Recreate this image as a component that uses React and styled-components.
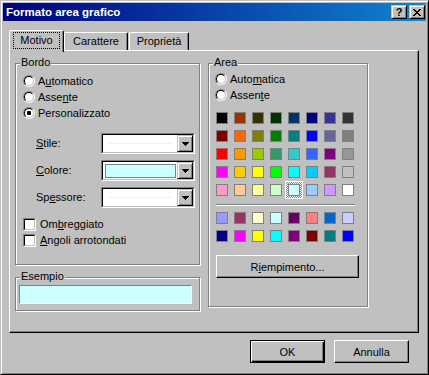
import React from "react";
import styled, { createGlobalStyle } from "styled-components";

const FACE = "#c0c0c0";
const SHADOW = "#808080";
const PALE_CYAN = "#ccffff";

// Excel colour palette: 5 rows of the standard set, then chart fills and chart lines
const standardColors = [
  ["#000000", "#993300", "#333300", "#003300", "#003366", "#000080", "#333399", "#333333"],
  ["#800000", "#ff6600", "#808000", "#008000", "#008080", "#0000ff", "#666699", "#808080"],
  ["#ff0000", "#ff9900", "#99cc00", "#339966", "#33cccc", "#3366ff", "#800080", "#969696"],
  ["#ff00ff", "#ffcc00", "#ffff00", "#00ff00", "#00ffff", "#00ccff", "#993366", "#c0c0c0"],
  ["#ff99cc", "#ffcc99", "#ffff99", "#ccffcc", "#ccffff", "#99ccff", "#cc99ff", "#ffffff"],
];
const chartColors = [
  ["#9999ff", "#993366", "#ffffcc", "#ccffff", "#660066", "#ff8080", "#0066cc", "#ccccff"],
  ["#000080", "#ff00ff", "#ffff00", "#00ffff", "#800080", "#800000", "#008080", "#0000ff"],
];

const App = () => {
  return (
    <>
      <GlobalStyle />
      <Window>
        {/* barra del titolo */}
        <TitleBar>
          <TitleText>Formato area grafico</TitleText>
          <TitleButton>?</TitleButton>
          <TitleButton>
            <svg width="8" height="7" viewBox="0 0 8 7">
              <path
                fill="#000"
                d="M0 0h2v1H0z M6 0h2v1H6z M1 1h2v1H1z M5 1h2v1H5z M2 2h4v1H2z M3 3h2v1H3z M2 4h4v1H2z M1 5h2v1H1z M5 5h2v1H5z M0 6h2v1H0z M6 6h2v1H6z"
              />
            </svg>
          </TitleButton>
        </TitleBar>

        <Body>
          {/* schede */}
          <TabRow>
            <Tab $active $w={55}>
              <FocusRing>Motivo</FocusRing>
            </Tab>
            <Tab $w={64}>Carattere</Tab>
            <Tab $w={60} $gap={1}>Proprietà</Tab>
          </TabRow>

          <Panel>
            <Column>
              <GroupBox $h={202}>
                <Legend>Bordo</Legend>
                <RadioList $top={9} $left={7}>
                  <OptionRow>
                    <Radio />
                    <span>A<u>u</u>tomatico</span>
                  </OptionRow>
                  <OptionRow>
                    <Radio />
                    <span>Asse<u>n</u>te</span>
                  </OptionRow>
                  <OptionRow>
                    <Radio checked />
                    <span>Personalizzato</span>
                  </OptionRow>
                </RadioList>

                <FieldList>
                  <FieldRow>
                    <FieldLabel><u>S</u>tile:</FieldLabel>
                    <ComboBox><LineSample /></ComboBox>
                  </FieldRow>
                  <FieldRow>
                    <FieldLabel><u>C</u>olore:</FieldLabel>
                    <ComboBox><ColorSample /></ComboBox>
                  </FieldRow>
                  <FieldRow>
                    <FieldLabel>Sp<u>e</u>ssore:</FieldLabel>
                    <ComboBox><LineSample /></ComboBox>
                  </FieldRow>
                </FieldList>

                <CheckList>
                  <OptionRow $gap={4}>
                    <CheckBox />
                    <span>Om<u>b</u>reggiato</span>
                  </OptionRow>
                  <OptionRow $gap={4}>
                    <CheckBox />
                    <span><u>A</u>ngoli arrotondati</span>
                  </OptionRow>
                </CheckList>
              </GroupBox>

              <GroupBox $h={34}>
                <Legend>Esempio</Legend>
                <Preview />
              </GroupBox>
            </Column>

            <GroupBox $h={244} $w={160}>
              <Legend>Area</Legend>
              <RadioList $top={7} $left={6}>
                <OptionRow>
                  <Radio />
                  <span>Auto<u>m</u>atica</span>
                </OptionRow>
                <OptionRow>
                  <Radio />
                  <span>Assen<u>t</u>e</span>
                </OptionRow>
              </RadioList>

              <SwatchGrid $top={6}>
                {standardColors.flat().map((c, i) => (
                  <SwatchCell key={i} $selected={i === 36}>
                    <Swatch style={{ background: c }} />
                  </SwatchCell>
                ))}
              </SwatchGrid>
              <Separator />
              <SwatchGrid>
                {chartColors.flat().map((c, i) => (
                  <SwatchCell key={i}>
                    <Swatch style={{ background: c }} />
                  </SwatchCell>
                ))}
              </SwatchGrid>

              <FillButton>R<u>i</u>empimento...</FillButton>
            </GroupBox>
          </Panel>

          <Footer>
            <Button $default>OK</Button>
            <Button>Annulla</Button>
          </Footer>
        </Body>
      </Window>
    </>
  );
};

// piccoli controlli
const Radio = ({ checked }) => (
  <RadioOuter>
    <RadioInner>{checked && <RadioDot />}</RadioInner>
  </RadioOuter>
);

const CheckBox = () => (
  <CheckOuter>
    <CheckInner />
  </CheckOuter>
);

const ComboBox = ({ children }) => (
  <ComboOuter>
    <ComboInner>
      <ComboValue>{children}</ComboValue>
      <DropButton>
        <svg width="7" height="4" viewBox="0 0 7 4">
          <path fill="#000" d="M0 0h7v1H0z M1 1h5v1H1z M2 2h3v1H2z M3 3h1v1H3z" />
        </svg>
      </DropButton>
    </ComboInner>
  </ComboOuter>
);

// styled components
const GlobalStyle = createGlobalStyle`
  html, body {
    margin: 0;
    padding: 0;
    background: ${FACE};
  }
  body {
    font-family: "Liberation Sans", Arial, sans-serif;
    font-size: 11px;
    color: #000;
  }
  u {
    text-underline-offset: 1px;
  }
`;

const Window = styled.div`
  box-sizing: border-box;
  width: 429px;
  height: 375px;
  padding: 2px;
  background: ${FACE};
  border: 1px solid;
  border-color: ${FACE} #000 #000 ${FACE};
  box-shadow: inset 1px 1px #fff, inset -1px -1px ${SHADOW};
  display: flex;
  flex-direction: column;
`;

const TitleBar = styled.div`
  height: 18px;
  flex: none;
  display: flex;
  align-items: center;
  gap: 2px;
  padding: 0 1px 0 3px;
  background: linear-gradient(to right, #000080, #1084d0);
`;

const TitleText = styled.div`
  flex: 1;
  color: #fff;
  font-weight: bold;
  font-size: 11.5px;
  line-height: 13px;
`;

const TitleButton = styled.div`
  box-sizing: border-box;
  width: 16px;
  height: 14px;
  background: ${FACE};
  border: 1px solid;
  border-color: ${FACE} #000 #000 ${FACE};
  box-shadow: inset 1px 1px #fff, inset -1px -1px ${SHADOW};
  display: flex;
  align-items: center;
  justify-content: center;
  font-weight: bold;
  font-size: 11px;
  line-height: 11px;
`;

const Body = styled.div`
  flex: 1;
  display: flex;
  flex-direction: column;
  padding: 9px 7px 0 6px;
`;

const TabRow = styled.div`
  height: 20px;
  display: flex;
  align-items: flex-end;
`;

const Tab = styled.div`
  box-sizing: border-box;
  position: relative;
  z-index: ${(p) => (p.$active ? 2 : 0)};
  width: ${(p) => p.$w}px;
  height: ${(p) => (p.$active ? 22 : 18)}px;
  margin-bottom: ${(p) => (p.$active ? -2 : 0)}px;
  margin-left: ${(p) => p.$gap || 0}px;
  background: ${FACE};
  border: 1px solid;
  border-bottom: none;
  border-color: #fff #000 transparent #fff;
  border-radius: 2px 2px 0 0;
  box-shadow: inset -1px 0 ${SHADOW};
  display: flex;
  align-items: ${(p) => (p.$active ? "flex-start" : "center")};
  justify-content: center;
  padding-top: ${(p) => (p.$active ? 1 : 0)}px;
  line-height: 13px;
`;

const FocusRing = styled.span`
  padding: 1px 6px;
  border: 1px dotted #000;
  line-height: 13px;
`;

const Panel = styled.div`
  box-sizing: border-box;
  height: 283px;
  flex: none;
  border: 1px solid;
  border-color: #fff #000 #000 #fff;
  box-shadow: inset -1px -1px ${SHADOW};
  padding: 0 5px;
  display: flex;
  align-items: flex-start;
  gap: 8px;
`;

const Column = styled.div`
  display: flex;
  flex-direction: column;
  width: 185px;
`;

const GroupBox = styled.div`
  box-sizing: border-box;
  position: relative;
  width: ${(p) => p.$w || 185}px;
  height: ${(p) => p.$h}px;
  margin-top: 12px;
  border: 1px solid ${SHADOW};
  box-shadow: inset 1px 1px #fff, 1px 1px #fff;
`;

const Legend = styled.span`
  position: absolute;
  top: -8px;
  left: 4px;
  padding: 0 1px;
  background: ${FACE};
  line-height: 13px;
`;

const RadioList = styled.div`
  display: flex;
  flex-direction: column;
  padding: ${(p) => p.$top}px 0 0 ${(p) => p.$left}px;
`;

const OptionRow = styled.label`
  display: flex;
  align-items: center;
  height: 16px;
  gap: ${(p) => p.$gap || 3}px;
  line-height: 13px;
  white-space: nowrap;
`;

const RadioOuter = styled.span`
  box-sizing: border-box;
  width: 12px;
  height: 12px;
  flex: none;
  border-radius: 50%;
  border: 1px solid;
  border-color: ${SHADOW} #fff #fff ${SHADOW};
  display: flex;
`;

const RadioInner = styled.span`
  box-sizing: border-box;
  flex: 1;
  border-radius: 50%;
  border: 1px solid;
  border-color: #000 ${FACE} ${FACE} #000;
  background: #fff;
  display: flex;
  align-items: center;
  justify-content: center;
`;

const RadioDot = styled.span`
  width: 4px;
  height: 4px;
  border-radius: 1px;
  background: #000;
`;

const FieldList = styled.div`
  display: flex;
  flex-direction: column;
  gap: 6px;
  padding: 12px 0 0 20px;
`;

const FieldRow = styled.div`
  display: flex;
  align-items: center;
`;

const FieldLabel = styled.span`
  width: 65px;
  line-height: 13px;
`;

const ComboOuter = styled.div`
  box-sizing: border-box;
  width: 94px;
  height: 21px;
  border: 1px solid;
  border-color: ${SHADOW} #fff #fff ${SHADOW};
  display: flex;
`;

const ComboInner = styled.div`
  flex: 1;
  display: flex;
  border: 1px solid;
  border-color: #000 ${FACE} ${FACE} #000;
  background: #fff;
`;

const ComboValue = styled.div`
  flex: 1;
  display: flex;
  align-items: center;
  justify-content: center;
`;

const LineSample = styled.span`
  width: 63px;
  height: 1px;
  background: ${PALE_CYAN};
`;

const ColorSample = styled.span`
  box-sizing: border-box;
  align-self: stretch;
  flex: 1;
  margin: 2px 1px 1px 2px;
  border: 1px solid ${SHADOW};
  background: ${PALE_CYAN};
`;

const DropButton = styled.div`
  box-sizing: border-box;
  width: 16px;
  background: ${FACE};
  border: 1px solid;
  border-color: ${FACE} #000 #000 ${FACE};
  box-shadow: inset 1px 1px #fff, inset -1px -1px ${SHADOW};
  display: flex;
  align-items: center;
  justify-content: center;
`;

const CheckList = styled.div`
  display: flex;
  flex-direction: column;
  padding: 8px 0 0 7px;
`;

const CheckOuter = styled.span`
  box-sizing: border-box;
  width: 13px;
  height: 13px;
  flex: none;
  border: 1px solid;
  border-color: ${SHADOW} #fff #fff ${SHADOW};
  display: flex;
`;

const CheckInner = styled.span`
  flex: 1;
  border: 1px solid;
  border-color: #000 ${FACE} ${FACE} #000;
  background: #fff;
`;

const Preview = styled.div`
  box-sizing: border-box;
  width: 173px;
  height: 19px;
  margin: 7px 0 0 3px;
  border: 1px solid;
  border-color: ${SHADOW} #fff #fff ${SHADOW};
  background: ${PALE_CYAN};
`;

const SwatchGrid = styled.div`
  display: grid;
  grid-template-columns: repeat(8, 18px);
  grid-auto-rows: 18px;
  margin: ${(p) => p.$top || 0}px 0 0 4px;
`;

const SwatchCell = styled.div`
  box-sizing: border-box;
  display: flex;
  align-items: center;
  justify-content: center;
  ${(p) =>
    p.$selected &&
    `
    border: 1px solid #fff;
    background: repeating-conic-gradient(${SHADOW} 0 25%, #fff 0 50%) 0 0 / 2px 2px;
  `}
`;

const Swatch = styled.span`
  box-sizing: border-box;
  width: 12px;
  height: 12px;
  border: 1px solid ${SHADOW};
`;

const Separator = styled.div`
  width: 139px;
  height: 1px;
  margin: 5px 0 3px 7px;
  background: ${SHADOW};
  border-bottom: 1px solid #fff;
`;

const Button = styled.button`
  box-sizing: border-box;
  width: 75px;
  height: 23px;
  padding: 0;
  background: ${FACE};
  font-family: "Liberation Sans", Arial, sans-serif;
  font-size: 11px;
  color: #000;
  border: 1px solid;
  border-color: #fff #000 #000 #fff;
  box-shadow: inset -1px -1px ${SHADOW};
  ${(p) =>
    p.$default &&
    `
    border-color: #000;
    box-shadow: inset 1px 1px #fff, inset -1px -1px #000, inset -2px -2px ${SHADOW};
  `}
`;

const FillButton = styled(Button)`
  width: 143px;
  margin: 10px 0 0 7px;
`;

const Footer = styled.div`
  display: flex;
  justify-content: flex-end;
  gap: 9px;
  padding: 7px 10px 0 0;
`;

export default App;
